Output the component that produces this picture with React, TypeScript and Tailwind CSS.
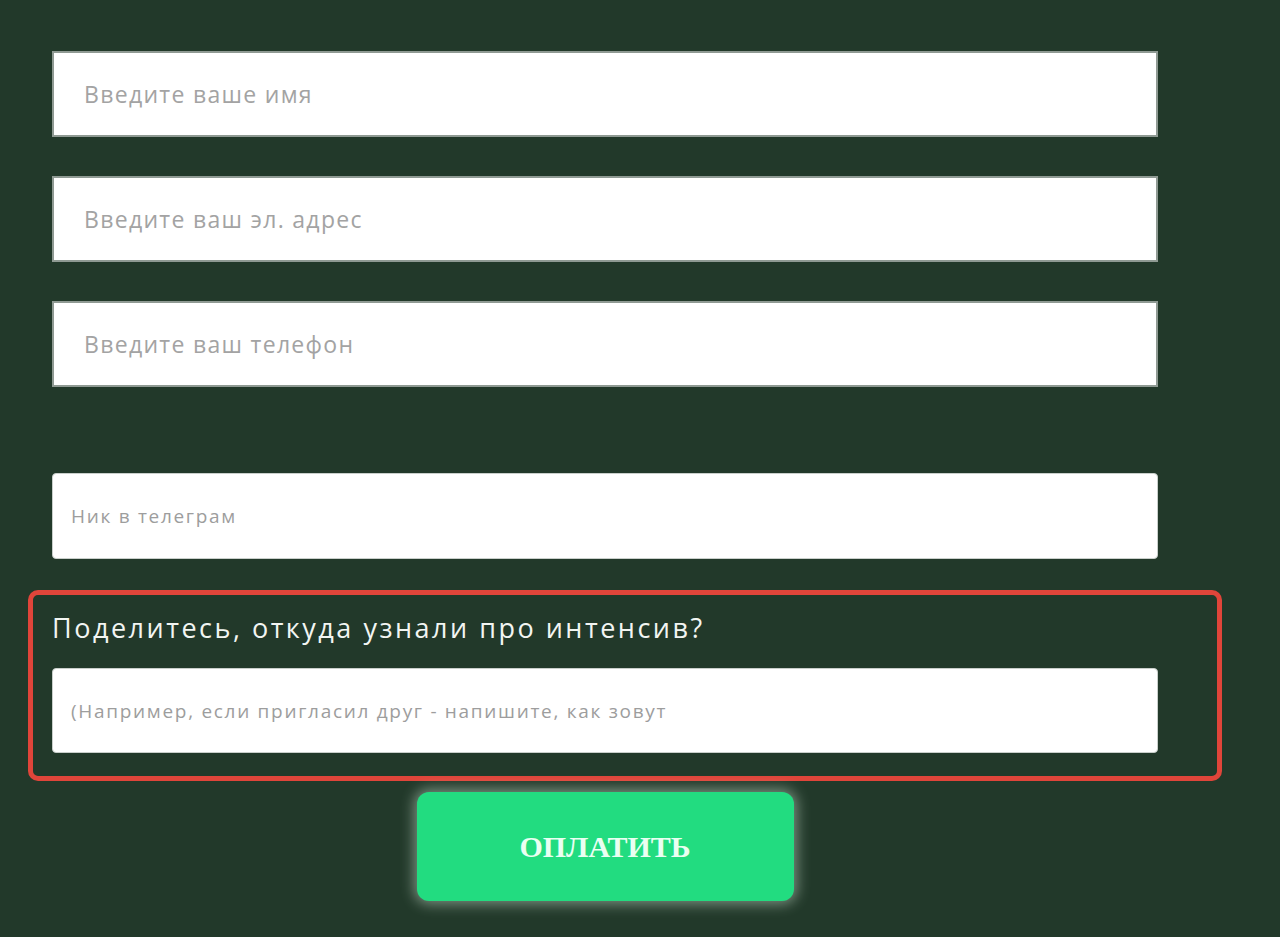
const FIELDS = ["Введите ваше имя", "Введите ваш эл. адрес", "Введите ваш телефон"];

const FONT = "font-['Open_Sans','Liberation_Sans',sans-serif]";

export default function App() {
  return (
    <div className={`min-h-[937px] w-[1280px] bg-[#22392a] ${FONT}`}>
      <form className="flex flex-col pl-[52px] pt-[51px]">
        <div className="flex flex-col gap-[39px]">
          {FIELDS.map((f) => (
            <input
              key={f}
              type="text"
              placeholder={f}
              className="h-[86px] w-[1106px] border-2 border-[#8f9a93] bg-white px-[30px] text-[23px] tracking-[1.3px] text-[#333] outline-none placeholder:text-[#a3a3a3]"
            />
          ))}
        </div>

        <input
          type="text"
          placeholder="Ник в телеграм"
          className="mt-[86px] h-[86px] w-[1106px] rounded-[4px] border border-[#c9cfcb] bg-white px-[18px] text-[19px] tracking-[1.7px] text-[#333] outline-none placeholder:text-[#9d9d9d]"
        />

        {/* выделенный блок с вопросом */}
        <div className="-ml-[24px] mt-[31px] flex w-[1194px] flex-col rounded-[10px] border-[5px] border-[#e0453a] pb-[23px] pl-[19px] pt-[14px]">
          <label className="text-[27px] leading-[38px] tracking-[2.5px] text-[#f2f5f2]">
            Поделитесь, откуда узнали про интенсив?
          </label>
          <input
            type="text"
            placeholder="(Например, если пригласил друг - напишите, как зовут"
            className="mt-[21px] h-[85px] w-[1106px] rounded-[4px] border border-[#c9cfcb] bg-white px-[18px] text-[19px] tracking-[1.7px] text-[#333] outline-none placeholder:text-[#9d9d9d]"
          />
        </div>

        <div className="mt-[11px] flex w-[1106px] justify-center">
          <button
            type="button"
            className="h-[109px] w-[377px] rounded-[12px] bg-[#22dc80] font-['Liberation_Serif',serif] text-[30px] font-bold text-[#eafff2] shadow-[0_0_14px_3px_rgba(230,255,235,0.45)]"
          >
            ОПЛАТИТЬ
          </button>
        </div>
      </form>
    </div>
  );
}
